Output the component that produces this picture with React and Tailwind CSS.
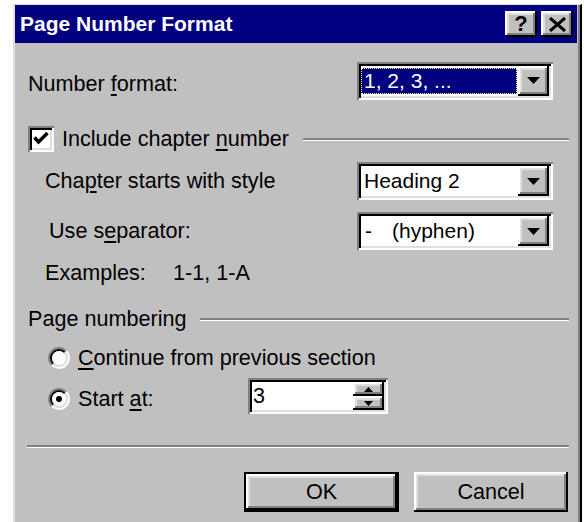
import React from "react";

// Win98 style bevels, doubled for the large dialog
const raised =
  "shadow-[inset_-2px_-2px_0_#000,inset_2px_2px_0_#fff,inset_-4px_-4px_0_#808080,inset_4px_4px_0_#dfdfdf]";
const sunken =
  "shadow-[inset_2px_2px_0_#808080,inset_-2px_-2px_0_#fff,inset_4px_4px_0_#000,inset_-4px_-4px_0_#dfdfdf]";

const Key = ({ children }) => (
  <span className="underline decoration-2 underline-offset-[3px]">{children}</span>
);

const DownArrow = () => (
  <svg width="13" height="7" viewBox="0 0 13 7">
    <polygon points="0,0 13,0 6.5,7" fill="#000" />
  </svg>
);

const ArrowButton = () => (
  <div className={`flex h-full w-[31px] items-center justify-center bg-[#c0c0c0] ${raised}`}>
    <DownArrow />
  </div>
);

const Dropdown = ({ children, selected }) => (
  <div className={`mr-[16px] flex h-[38px] w-[196px] items-stretch bg-white p-[4px] text-[21px] ${sunken}`}>
    <div className="flex flex-1 items-center">
      {selected ? (
        <div className="mr-[1px] flex h-[26px] w-full items-center border border-dotted border-[#ffff80] bg-[#000080] pl-[2px] text-white">
          {children}
        </div>
      ) : (
        <div className="pl-[3px]">{children}</div>
      )}
    </div>
    <ArrowButton />
  </div>
);

const Etched = ({ className }) => (
  <div className={`h-[3px] border-t-2 border-b border-t-[#808080] border-b-white ${className}`} />
);

const Checkbox = () => (
  <div className={`flex h-[26px] w-[26px] shrink-0 items-center justify-center bg-white ${sunken}`}>
    <svg width="26" height="26" viewBox="0 0 26 26">
      <polyline points="6.5,11.5 10.5,16 19.5,7" fill="none" stroke="#000" strokeWidth="3.5" />
    </svg>
  </div>
);

const Radio = ({ checked }) => (
  <svg width="22" height="22" viewBox="0 0 22 22" className="shrink-0">
    <path d="M3.93 18.07 A10 10 0 0 1 18.07 3.93" fill="none" stroke="#808080" strokeWidth="2" />
    <path d="M18.07 3.93 A10 10 0 0 1 3.93 18.07" fill="none" stroke="#fff" strokeWidth="2" />
    <path d="M5.34 16.66 A8 8 0 0 1 16.66 5.34" fill="none" stroke="#000" strokeWidth="2" />
    <path d="M16.66 5.34 A8 8 0 0 1 5.34 16.66" fill="none" stroke="#dfdfdf" strokeWidth="2" />
    <circle cx="11" cy="11" r="7" fill="#fff" />
    {checked && <circle cx="11" cy="11" r="3" fill="#000" />}
  </svg>
);

const SpinButton = ({ up }) => (
  <div className={`flex flex-1 items-center justify-center bg-[#c0c0c0] ${raised}`}>
    <svg width="9" height="5" viewBox="0 0 9 5">
      <polygon points={up ? "0,5 9,5 4.5,0" : "0,0 9,0 4.5,5"} fill="#000" />
    </svg>
  </div>
);

const TitleButton = ({ children }) => (
  <div className={`flex h-[26px] w-[32px] items-center justify-center bg-[#c0c0c0] ${raised}`}>
    {children}
  </div>
);

export default function App() {
  return (
    <div className="h-[522px] w-[584px] overflow-hidden bg-white pl-[13px] pr-[2px] pt-[4px] font-['Liberation_Sans',Arial,sans-serif] text-[21.6px] leading-[24px] text-black">
      <div className="h-full border-l-2 border-r-2 border-t border-l-[#dfdfdf] border-t-[#dfdfdf] border-r-black bg-[#c0c0c0]">
        <div className="h-full border-r-2 border-r-[#808080]">
          {/* title bar */}
          <div className="mr-[1px] flex h-[38px] items-center bg-[#000080] pl-[5px] pr-[4px] text-[21px]">
            <span className="flex-1 font-bold text-white">Page Number Format</span>
            <div className="flex gap-[4px]">
              <TitleButton>
                <span className="text-[22px] font-bold leading-none">?</span>
              </TitleButton>
              <TitleButton>
                <svg width="17" height="15" viewBox="0 0 17 15">
                  <path d="M1 1 L16 14 M16 1 L1 14" stroke="#000" strokeWidth="3" />
                </svg>
              </TitleButton>
            </div>
          </div>

          <div className="flex flex-col pl-[13px] pr-[9px]">
            {/* number format */}
            <div className="mt-[19px] flex h-[37px] items-center justify-between">
              <span className="mt-[6px]">
                Number <Key>f</Key>ormat:
              </span>
              <Dropdown selected>1, 2, 3, ...</Dropdown>
            </div>

            {/* chapter group */}
            <div className="mt-[27px] flex h-[26px] items-center">
              <Checkbox />
              <span className="ml-[8px]">
                Include chapter <Key>n</Key>umber
              </span>
              <Etched className="ml-[14px] flex-1" />
            </div>

            <div className="mt-[10px] flex h-[38px] items-center justify-between">
              <span className="pl-[17px]">
                Cha<Key>p</Key>ter starts with style
              </span>
              <Dropdown>Heading 2</Dropdown>
            </div>

            <div className="mt-[12px] flex h-[38px] items-center justify-between">
              <span className="pl-[21px]">
                Use s<Key>e</Key>parator:
              </span>
              <Dropdown>
                <span className="inline-block w-[28px] pl-[1px]">-</span>(hyphen)
              </Dropdown>
            </div>

            <div className="mt-[11px] flex h-[24px] items-center pl-[17px]">
              <span className="w-[128px]">Examples:</span>
              <span>1-1, 1-A</span>
            </div>

            {/* page numbering group */}
            <div className="mt-[22px] flex h-[24px] items-center">
              <span>Page numbering</span>
              <Etched className="ml-[14px] flex-1" />
            </div>

            <div className="mt-[15px] flex h-[24px] items-center gap-[8px] pl-[20px]">
              <Radio />
              <span>
                <Key>C</Key>ontinue from previous section
              </span>
            </div>

            <div className="mt-[8px] flex h-[36px] items-center pl-[20px]">
              <div className="mt-[5px] flex w-[200px] items-center gap-[8px]">
                <Radio checked />
                <span>
                  Start <Key>a</Key>t:
                </span>
              </div>
              <div className={`flex h-[36px] w-[140px] bg-white p-[4px] ${sunken}`}>
                <div className="flex flex-1 items-center pl-[1px]">3</div>
                <div className="flex w-[31px] flex-col">
                  <SpinButton up />
                  <SpinButton />
                </div>
              </div>
            </div>

            <Etched className="-ml-[1px] mt-[31px]" />

            {/* dialog buttons */}
            <div className="mt-[24px] flex justify-end gap-[15px] pr-[1px]">
              <div className="h-[40px] w-[155px] border-2 border-black">
                <div className={`flex h-full items-center justify-center bg-[#c0c0c0] ${raised}`}>OK</div>
              </div>
              <div className={`flex h-[40px] w-[154px] items-center justify-center bg-[#c0c0c0] ${raised}`}>
                Cancel
              </div>
            </div>
          </div>
        </div>
      </div>
    </div>
  );
}
